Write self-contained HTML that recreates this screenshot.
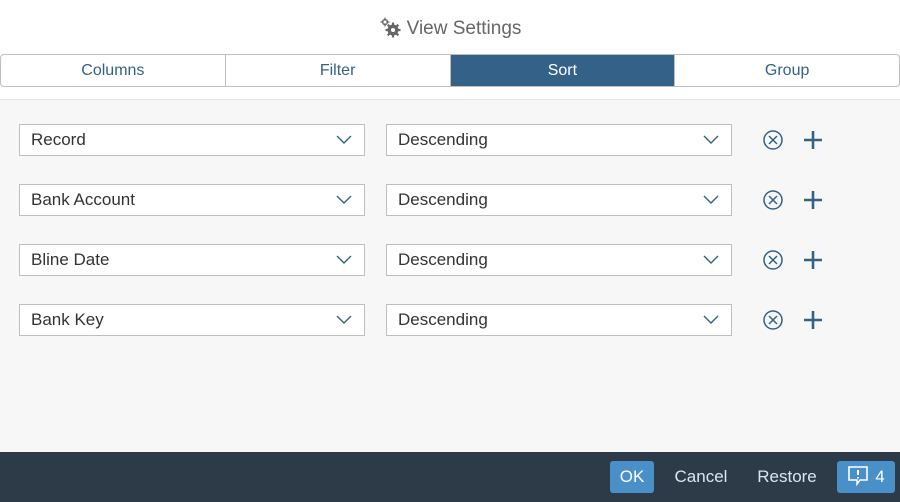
<!DOCTYPE html><html><head><style>
body{margin:0;width:900px;height:502px;overflow:hidden;font-family:"Liberation Sans",sans-serif;background:#fff;position:relative}
.hdr{position:absolute;top:2px;left:0;width:900px;height:53px;text-align:center;line-height:54px;font-size:19px;color:#666}
.tabs{position:absolute;top:54px;left:0;width:898px;height:31px;border:1px solid #bfbfbf;border-radius:4px;display:flex;overflow:hidden}
.tabs div{flex:1;text-align:center;line-height:31px;font-size:16px;color:#346187;border-left:1px solid #bfbfbf}
.tabs div:first-child{border-left:none}
.tabs .sel{background:#346187;color:#fff}
.body{position:absolute;top:99px;left:0;width:900px;height:353px;background:#f7f7f7;border-top:1px solid #e5e5e5}
.sel-box{position:absolute;height:30px;border:1px solid #bfbfbf;background:#fff;font-size:17px;color:#333;line-height:30px;padding-left:11px;box-sizing:content-box}
.sel-box svg{position:absolute;right:12px;top:10px}
.ft{position:absolute;top:452px;left:0;width:900px;height:50px;background:#2d3a47}
.btn{position:absolute;top:9px;height:32px;line-height:32px;font-size:17px;color:#fff;text-align:center;border-radius:3px}
</style></head><body>
<div class="hdr"><svg width="22" height="22" viewBox="0 0 22 22" style="vertical-align:-4px;margin-right:6px"><g fill="none" stroke="#666" stroke-width="1.3"><circle cx="6" cy="6" r="2.5"/></g><circle cx="14" cy="14" r="5.5" fill="#666"/><g stroke="#666" stroke-width="2.2"><line x1="14" y1="6.5" x2="14" y2="21.5"/><line x1="6.5" y1="14" x2="21.5" y2="14"/><line x1="8.7" y1="8.7" x2="19.3" y2="19.3"/><line x1="19.3" y1="8.7" x2="8.7" y2="19.3"/></g><circle cx="14" cy="14" r="2" fill="#fff"/><g stroke="#666" stroke-width="1.2"><line x1="6" y1="1.5" x2="6" y2="10.5"/><line x1="1.5" y1="6" x2="10.5" y2="6"/></g><circle cx="6" cy="6" r="1.3" fill="#fff"/></svg>View Settings</div>
<div class="tabs"><div>Columns</div><div>Filter</div><div class="sel">Sort</div><div>Group</div></div>
<div class="body"></div>
<div class="sel-box" style="left:19px;top:124px;width:333px">Record<svg width="16" height="10"><path d="M1 1l7 7 7-7" fill="none" stroke="#346187" stroke-width="1.4"/></svg></div>
<div class="sel-box" style="left:386px;top:124px;width:333px">Descending<svg width="16" height="10"><path d="M1 1l7 7 7-7" fill="none" stroke="#346187" stroke-width="1.4"/></svg></div>
<div class="sel-box" style="left:19px;top:184px;width:333px">Bank Account<svg width="16" height="10"><path d="M1 1l7 7 7-7" fill="none" stroke="#346187" stroke-width="1.4"/></svg></div>
<div class="sel-box" style="left:386px;top:184px;width:333px">Descending<svg width="16" height="10"><path d="M1 1l7 7 7-7" fill="none" stroke="#346187" stroke-width="1.4"/></svg></div>
<div class="sel-box" style="left:19px;top:244px;width:333px">Bline Date<svg width="16" height="10"><path d="M1 1l7 7 7-7" fill="none" stroke="#346187" stroke-width="1.4"/></svg></div>
<div class="sel-box" style="left:386px;top:244px;width:333px">Descending<svg width="16" height="10"><path d="M1 1l7 7 7-7" fill="none" stroke="#346187" stroke-width="1.4"/></svg></div>
<div class="sel-box" style="left:19px;top:304px;width:333px">Bank Key<svg width="16" height="10"><path d="M1 1l7 7 7-7" fill="none" stroke="#346187" stroke-width="1.4"/></svg></div>
<div class="sel-box" style="left:386px;top:304px;width:333px">Descending<svg width="16" height="10"><path d="M1 1l7 7 7-7" fill="none" stroke="#346187" stroke-width="1.4"/></svg></div>
<svg style="position:absolute;left:760px;top:127px" width="70" height="210">
<g id="ic" fill="none" stroke="#346187">
<circle cx="13" cy="13" r="9" stroke-width="1.5"/><path d="M9 9l8 8M17 9l-8 8" stroke-width="1.5"/><path d="M53 4v18M44 13h18" stroke-width="2.6"/></g>
<use href="#ic" y="60"/><use href="#ic" y="120"/><use href="#ic" y="180"/></svg>
<div class="ft">
<div class="btn" style="left:610px;width:44px;background:#4a90c8">OK</div>
<div class="btn" style="left:668px;width:66px;color:#d8e6f2">Cancel</div>
<div class="btn" style="left:752px;width:70px;color:#d8e6f2">Restore</div>
<div class="btn" style="left:837px;width:58px;background:#4a90c8"><svg width="22" height="22" viewBox="0 0 22 22" style="vertical-align:-4px;margin-right:6px"><path d="M2 3h18v13h-7l-3 4v-4H2z" fill="none" stroke="#fff" stroke-width="1.6"/><path d="M11 6v5M11 13v1.5" stroke="#fff" stroke-width="2"/></svg>4</div>
</div>
</body></html>
